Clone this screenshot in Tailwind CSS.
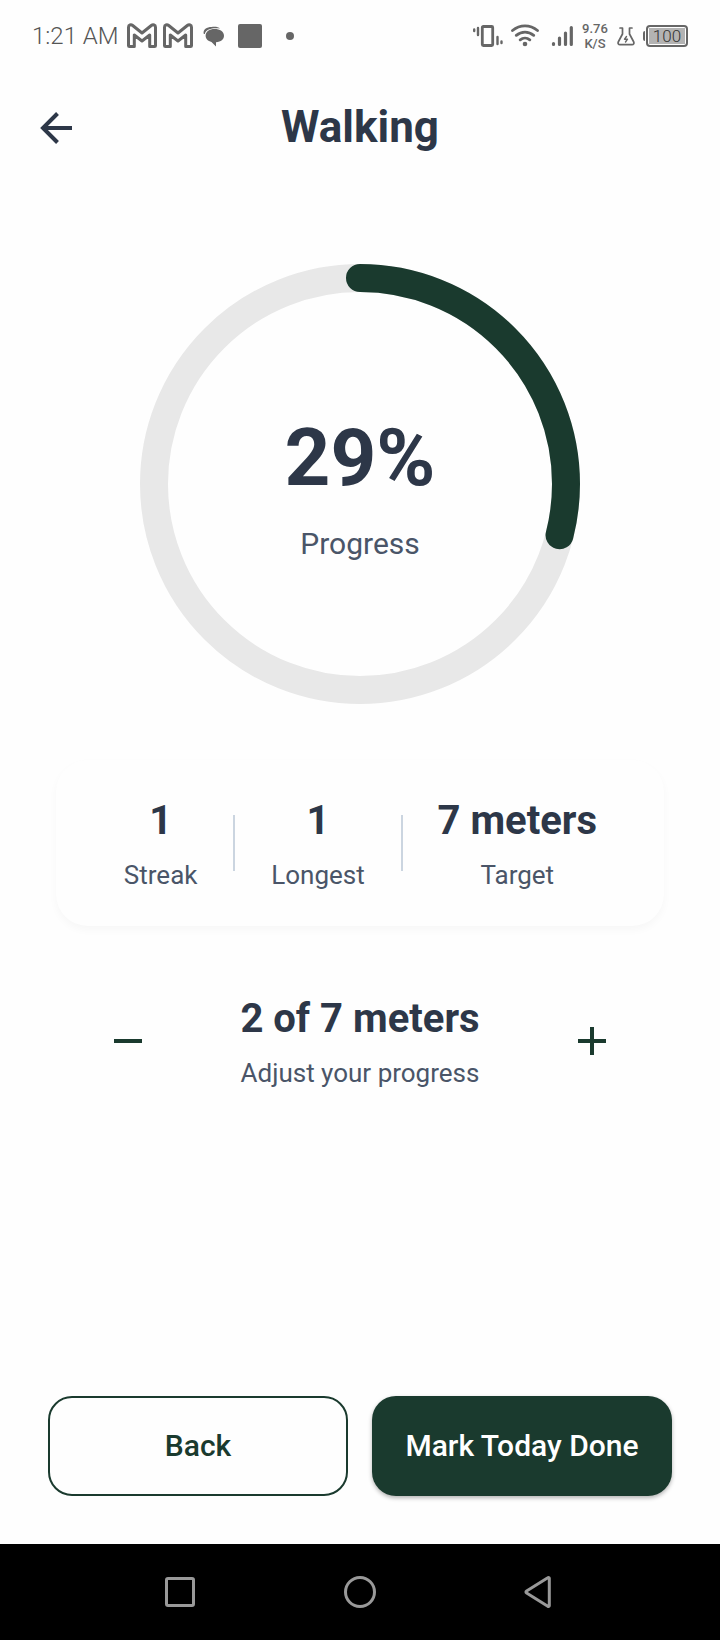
<!DOCTYPE html>
<html lang="en">
<head>
<meta charset="utf-8">
<meta name="viewport" content="width=device-width, initial-scale=1">
<title>Walking</title>
<script src="https://cdn.jsdelivr.net/npm/@tailwindcss/browser@4"></script>
</head>
<body class="flex min-h-screen flex-col bg-[#fefefe] font-['Roboto',sans-serif] text-[#2d3748]">

<!-- Device status bar -->
<div class="flex h-18 items-center justify-between pr-8 pl-8 text-[#666666]">
  <div class="flex items-center">
    <span class="w-[94px] text-2xl font-light whitespace-nowrap text-[#555555]">1:21 AM</span>
    <svg class="h-7 w-9" viewBox="0 0 36 28" fill="none" stroke="currentColor" stroke-width="3" stroke-linejoin="round" aria-hidden="true"><path d="M2.500 23.700V5.200C2.500 2.800 5 2.200 6.700 3.500L16 11L25.300 3.500C27 2.200 29.500 2.800 29.500 5.200V23.700C29.500 24.300 29.200 24.600 28.500 24.600H23.700V13L16 19L8.300 13V24.600H3.500C2.800 24.600 2.500 24.300 2.500 23.700Z"/></svg>
    <svg class="h-7 w-9" viewBox="0 0 36 28" fill="none" stroke="currentColor" stroke-width="3" stroke-linejoin="round" aria-hidden="true"><path d="M2.500 23.700V5.200C2.500 2.800 5 2.200 6.700 3.500L16 11L25.300 3.500C27 2.200 29.500 2.800 29.500 5.200V23.700C29.500 24.300 29.200 24.600 28.500 24.600H23.700V13L16 19L8.300 13V24.600H3.500C2.800 24.600 2.500 24.300 2.500 23.700Z"/></svg>
    <svg class="ml-1 h-6 w-6" viewBox="0 0 24 24" fill="currentColor" aria-hidden="true"><path d="M1.800 10C.5 5.500 5 3 9.500 3C13 2.600 16.500 2.800 18 4.500C12 3.600 4 4.300 2.800 10Z"/><path d="M12.500 5C18 5 22 7.700 22 11.800C22 15.500 19 17.800 14 18.200V22.500L9.500 18C6 17.300 3.600 14.800 3.600 11.800C3.600 7.700 7.500 5 12.500 5Z"/></svg>
    <span class="ml-3 h-6 w-6 rounded-xs bg-[#666666]"></span>
    <span class="ml-6 h-2 w-2 rounded-full bg-[#666666]"></span>
  </div>
  <div class="flex items-center">
    <svg class="h-6 w-[30px]" viewBox="0 0 30 24" fill="none" stroke="currentColor" stroke-linecap="round" aria-hidden="true"><rect x="9.300" y="2.500" width="10.400" height="19" rx="1" stroke-width="2.800"/><path d="M1.200 5.500V7M5 4V11M24.500 13V20M28.500 17.500V19" stroke-width="2.400"/></svg>
    <svg class="ml-2 h-6 w-7" viewBox="0 0 28 24" fill="none" stroke="currentColor" stroke-width="2.800" stroke-linecap="round" aria-hidden="true"><path d="M1.500 6.500C9 .2 19 .2 26.500 6.500M5.300 11.300C10.500 7 17.500 7 22.700 11.300M9.200 15.800C12 13.600 16 13.600 18.800 15.800"/><circle cx="14" cy="20" r="2.300" fill="currentColor" stroke="none"/></svg>
    <svg class="ml-3 h-6 w-[22px]" viewBox="0 0 22 24" stroke="currentColor" stroke-width="3.200" stroke-linecap="round" aria-hidden="true"><path d="M2.500 19.500V20.500M8.500 14V20.500M14.500 9V20.500M20.300 3.500V20.500"/></svg>
    <span class="ml-2 w-7 text-center text-[13px] leading-[15px] font-medium">9.76<br>K/S</span>
    <svg class="ml-2 mr-2 h-6 w-[18px]" viewBox="0 0 18 24" fill="none" stroke="currentColor" stroke-width="1.700" stroke-linecap="round" stroke-linejoin="round" aria-hidden="true"><path d="M3 4H5.500V10L1.500 17.500C.5 19.500 1.500 20.700 3 20.700H15C16.500 20.700 17.500 19.500 16.500 17.500L12.500 10V4H15"/><path d="M9.500 12.500L7.500 15.200H10.500L8.500 18" stroke-width="1.400"/></svg>
    <span class="h-2.5 w-0.5 rounded-l bg-[#666666]"></span>
    <span class="ml-px flex h-[22px] w-[42px] items-center justify-center rounded border-2 border-[#666666] p-px"><span class="flex h-4 w-full items-center justify-center bg-[#b3b3b3] text-[17px] leading-4 font-light text-[#333333]">100</span></span>
  </div>
</div>

<header class="grid h-28 grid-cols-[64px_1fr_64px] items-center px-6">
  <button type="button" aria-label="Go back" class="flex h-16 w-16 items-center justify-center">
    <svg class="h-8 w-8" viewBox="0 0 32 32" fill="none" stroke="currentColor" stroke-width="4" aria-hidden="true"><path d="M32 16H3M17.500 1.500L3 16L17.500 30.500"/></svg>
  </button>
  <h1 class="pb-0.5 text-center text-[44px] leading-[52px] font-bold">Walking</h1>
</header>

<main class="flex grow flex-col px-12 pt-20 pb-12">
  <section class="grid place-items-center self-center">
    <svg class="col-start-1 row-start-1 h-[440px] w-[440px]" viewBox="0 0 440 440" fill="none" stroke-width="28" role="img" aria-label="29 percent complete">
      <circle cx="220" cy="220" r="206" stroke="#e8e8e8"/>
      <circle cx="220" cy="220" r="206" stroke="#1a3a2e" stroke-linecap="round" pathLength="100" stroke-dasharray="29 100" transform="rotate(-90 220 220)"/>
    </svg>
    <div class="col-start-1 row-start-1 text-center">
      <p class="text-[80px] leading-[94px] font-bold">29%</p>
      <p class="mt-[26px] text-[30px] leading-[26px] text-[#4a5568]">Progress</p>
    </div>
  </section>

  <section class="mx-2 mt-14 flex items-center justify-evenly rounded-[32px] bg-[#fefefe] px-8 py-10 text-center shadow-[0_4px_8px_rgba(0,0,0,0.03)]">
    <div class="min-w-[78px]">
      <p class="text-[40px] leading-[42px] font-bold">1</p>
      <p class="mt-[22px] text-[26px] leading-[22px] text-[#4a5568]">Streak</p>
    </div>
    <div class="h-14 w-0.5 bg-[#cbd5e0]"></div>
    <div class="min-w-[98px]">
      <p class="text-[40px] leading-[42px] font-bold">1</p>
      <p class="mt-[22px] text-[26px] leading-[22px] text-[#4a5568]">Longest</p>
    </div>
    <div class="h-14 w-0.5 bg-[#cbd5e0]"></div>
    <div class="min-w-[162px]">
      <p class="text-[40px] leading-[42px] font-bold">7 meters</p>
      <p class="mt-[22px] text-[26px] leading-[22px] text-[#4a5568]">Target</p>
    </div>
  </section>

  <section class="mt-18 flex items-center justify-between px-8 text-center">
    <button type="button" aria-label="Decrease progress" class="flex h-20 w-24 items-center justify-center text-[#1a3a2e]">
      <svg class="h-7 w-7" viewBox="0 0 28 28" stroke="currentColor" stroke-width="4" aria-hidden="true"><path d="M0 14H28"/></svg>
    </button>
    <div>
      <p class="text-[40px] leading-[42px] font-bold">2 of 7 meters</p>
      <p class="mt-[22px] text-[26px] leading-[22px] text-[#4a5568]">Adjust your progress</p>
    </div>
    <button type="button" aria-label="Increase progress" class="flex h-20 w-24 items-center justify-center text-[#1a3a2e]">
      <svg class="h-7 w-7" viewBox="0 0 28 28" stroke="currentColor" stroke-width="4" aria-hidden="true"><path d="M0 14H28M14 0V28"/></svg>
    </button>
  </section>

  <div class="mt-auto grid grid-cols-2 gap-6 text-[30px] leading-9 font-medium">
    <button type="button" class="h-25 rounded-3xl border-2 border-[#1a3a2e] text-[#1a3a2e]">Back</button>
    <button type="button" class="h-25 rounded-3xl bg-[#1a3a2e] whitespace-nowrap text-white shadow-[0_2px_4px_rgba(0,0,0,0.3)]">Mark Today Done</button>
  </div>
</main>

<!-- Android navigation -->
<nav aria-label="System navigation" class="grid h-24 grid-cols-3 items-center justify-items-center bg-black px-[90px] text-[#999999]">
  <button type="button" aria-label="Recent apps" class="p-2"><svg class="h-9 w-9" viewBox="0 0 36 36" fill="none" stroke="currentColor" stroke-width="3" aria-hidden="true"><rect x="4.500" y="4.500" width="27" height="27" rx="1.500"/></svg></button>
  <button type="button" aria-label="Home" class="p-2"><svg class="h-9 w-9" viewBox="0 0 36 36" fill="none" stroke="currentColor" stroke-width="3" aria-hidden="true"><circle cx="18" cy="18" r="14.500"/></svg></button>
  <button type="button" aria-label="Back one screen" class="p-2"><svg class="h-9 w-9" viewBox="0 0 36 36" fill="none" stroke="currentColor" stroke-width="3" stroke-linejoin="round" aria-hidden="true"><path d="M27.300 4.200C27.300 3.600 26.500 3.200 25.800 3.700L4.600 17C3.700 17.600 3.700 18.400 4.600 19L25.800 32.300C26.500 32.800 27.300 32.400 27.300 31.800Z"/></svg></button>
</nav>

</body>
</html>
